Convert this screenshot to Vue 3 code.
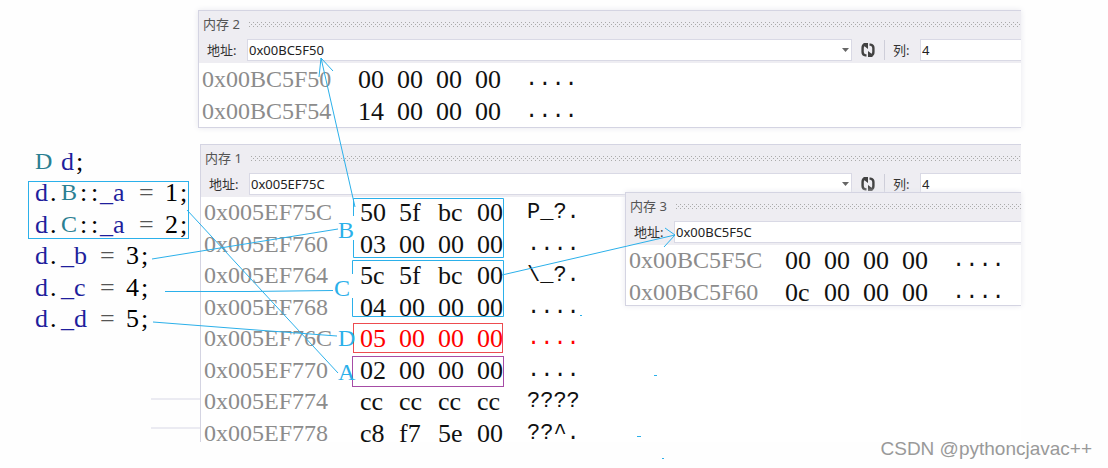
<script setup>
const bytes = (s) => s.split(' ')
const row = (address, data, ascii, changed = false) => ({ address, data: bytes(data), ascii, changed })

const panels = [
  {
    id: 2, place: 'upper', address: '0x00BC5F50', full: true,
    rows: [row('0x00BC5F50', '00 00 00 00', '....'), row('0x00BC5F54', '14 00 00 00', '....')],
  },
  {
    id: 1, place: 'lower', address: '0x005EF75C', full: true,
    rows: [
      row('0x005EF75C', '50 5f bc 00', 'P_?.'),
      row('0x005EF760', '03 00 00 00', '....'),
      row('0x005EF764', '5c 5f bc 00', '\\_?.'),
      row('0x005EF768', '04 00 00 00', '....'),
      row('0x005EF76C', '05 00 00 00', '....', true),
      row('0x005EF770', '02 00 00 00', '....'),
      row('0x005EF774', 'cc cc cc cc', '????'),
      row('0x005EF778', 'c8 f7 5e 00', '??^.'),
    ],
  },
  {
    id: 3, place: 'floating', address: '0x00BC5F5C', full: false,
    rows: [row('0x00BC5F5C', '00 00 00 00', '....'), row('0x00BC5F60', '0c 00 00 00', '....')],
  },
]

const member = (name, value) => [
  ['d', 'name'], ['.', 'dot'], [name, 'name wide'], ['=', 'op'], [value, 'num'], [';', 'dot'],
]
const qualified = (type, value) => [
  ['d', 'name'], ['.', 'dot'], [type, 'type'], [':', 'colon'], [':', 'colon'],
  ['_a', 'name wide'], ['=', 'op'], [value, 'num'], [';', 'dot'],
]
const code = [
  [['D', 'type declared'], ['d', 'name'], [';', 'dot']],
  qualified('B', '1'),
  qualified('C', '2'),
  member('_b', '3'),
  member('_c', '4'),
  member('_d', '5'),
]
</script>

<template>
  <main class="page">
    <pre class="code"><code v-for="(line, i) in code" :key="i" class="line"><span v-for="(t, j) in line" :key="j" class="token" :class="t[1]">{{ t[0] }}</span></code></pre>

    <div class="windows">
      <section v-for="p in panels" :key="p.id" class="panel" :class="p.place">
        <header class="title">
          <h2>内存 {{ p.id }}</h2>
          <svg class="grip" height="5" aria-hidden="true">
            <defs>
              <pattern :id="'grip' + p.id" width="4" height="4" patternUnits="userSpaceOnUse">
                <rect width="1" height="1" fill="#aaa" />
                <rect x="2" y="2" width="1" height="1" fill="#aaa" />
              </pattern>
            </defs>
            <rect width="100%" height="5" :fill="`url(#grip${p.id})`" />
          </svg>
        </header>
        <div class="toolbar">
          <label :for="'address' + p.id">地址:</label>
          <div class="combo">
            <input :id="'address' + p.id" type="text" :value="p.address" />
            <button v-if="p.full" type="button" aria-label="展开">
              <svg width="7" height="4" viewBox="0 0 7 4"><path d="M0 0h7L3.500 4z" fill="#666" /></svg>
            </button>
          </div>
          <template v-if="p.full">
            <button class="refresh" type="button" aria-label="刷新">
              <svg width="14" height="14" viewBox="0 0 14 14" fill="none" stroke="#424242" stroke-width="2.400">
                <path d="M5.500 12.400H4.500Q1.600 12 1.600 9V5Q1.600 1.800 4 1.800" />
                <path d="M8.500 1.600H9.500Q12.400 2 12.400 5V9Q12.400 12.200 10 12.200" />
                <path d="M2.500 0H7V6L2.500 2.500zM11.500 14H7V8L11.500 11.500z" fill="#424242" stroke="none" />
              </svg>
            </button>
            <label class="columns" :for="'columns' + p.id">列:</label>
            <input :id="'columns' + p.id" class="count" type="text" value="4" />
          </template>
        </div>
        <table>
          <tbody>
            <tr v-for="r in p.rows" :key="r.address" :class="{ changed: r.changed }">
              <th scope="row">{{ r.address }}</th>
              <td v-for="(b, k) in r.data" :key="k" class="byte">{{ b }}</td>
              <td class="ascii">{{ r.ascii }}</td>
            </tr>
          </tbody>
        </table>
      </section>
    </div>

    <svg class="notes" width="1108" height="468" viewBox="0 0 1108 468" aria-hidden="true">
      <g stroke="#ebebf2" stroke-width="2"><path d="M151 399H200M151 428H200" /></g>
      <g fill="none" stroke="#2bb0ea" stroke-width="1">
        <rect x="28.500" y="181.500" width="160" height="57" />
        <path d="M353.500 216V198.500H503.500V257.500H353.500V240" />
        <path d="M352.500 274V260.500H503.500V316.500H352.500V298" />
        <path d="M187 210L338 373" />
        <path d="M152 259L338 229" />
        <path d="M165 291.500H249L333 290.500" />
        <path d="M153 322L243 329L337 336" />
        <path d="M355 207L321 58M319 77L321 58L333 71" />
        <path d="M502 275L675 235M665 228L675 235L664 247" />
        <path d="M654 375.500h3M637 436.500h4M580 315.500h2M662 458.500h2" />
      </g>
      <rect x="353.500" y="323.500" width="149" height="29" fill="none" stroke="#ed4c50" />
      <rect x="352.500" y="356.500" width="151" height="30" fill="none" stroke="#a64ca6" />
      <g class="letters">
        <text x="338" y="238">B</text>
        <text x="334" y="296">C</text>
        <text x="338" y="346">D</text>
        <text x="338" y="380">A</text>
      </g>
    </svg>

    <footer class="mark">CSDN @pythoncjavac++</footer>
  </main>
</template>

<style>
body {
  background: #fefefe;
}
</style>

<style scoped>
.page {
  position: relative;
  display: flex;
  min-height: 468px;
  overflow: hidden;
  font-family: "Liberation Serif", serif;
}
.code {
  flex: 0 0 163px;
  margin: 0;
  padding: 146px 0 0 35px;
  font-size: 26px;
}
.line {
  display: flex;
  height: 31px;
  line-height: 31px;
  font-family: "Liberation Serif", serif;
}
.line:nth-child(even) {
  height: 32px;
}
.token {
  box-sizing: border-box;
  width: 13px;
}
.name {
  color: #1f1f9c;
}
.type {
  width: 17px;
  font-size: 24px;
  color: #2b7f92;
}
.declared {
  width: 26px;
}
.wide {
  width: 39px;
}
.op {
  width: 26px;
  color: #555;
}
.dot {
  padding-left: 2px;
}
.colon {
  width: 11px;
  padding-left: 2px;
}
.windows {
  position: relative;
  flex: 1;
  min-width: 0;
  padding: 10px 87px 0 0;
}
.panel {
  border: 1px solid #d4d4e2;
  border-right: 0;
  background: #fff;
  box-shadow: 0 0 6px #e8e8ee;
  font-family: "Noto Sans", "Noto Sans CJK SC", sans-serif;
  font-size: 13px;
  color: #333;
}
.lower {
  max-height: 297px;
  margin: 16px 0 0 2px;
  border-bottom: 0;
  box-shadow: none;
}
.floating {
  position: absolute;
  top: 192px;
  left: 427px;
  right: 87px;
  max-height: 112px;
}
.title {
  display: flex;
  align-items: center;
  gap: 9px;
  height: 26px;
  padding-left: 4px;
  background: #eeedf2;
}
h2 {
  margin: 0;
  font-size: 13px;
  font-weight: 400;
  line-height: 26px;
  color: #555;
}
.grip {
  flex: 1;
  min-width: 0;
}
.toolbar {
  display: flex;
  align-items: center;
  height: 26px;
  padding: 0 0 0 8px;
  background: #eeedf2;
}
.toolbar label {
  width: 40px;
  line-height: 20px;
}
input {
  box-sizing: border-box;
  min-width: 0;
  height: 20px;
  margin: 0;
  padding: 0 1px;
  border: 0;
  outline: 0;
  background: #fff;
  font: inherit;
  color: #222;
}
.combo {
  display: flex;
  flex: 1;
  min-width: 0;
  border: 1px solid #d9d9e5;
  background: #fff;
}
.floating .combo {
  border-right: 0;
}
.combo input {
  flex: 1;
}
button {
  display: grid;
  place-items: center;
  width: 12px;
  padding: 0;
  border: 0;
  background: none;
}
.refresh {
  width: 32px;
}
.toolbar .columns {
  width: 27px;
  padding-left: 8px;
  border-left: 1px solid #ceced9;
}
.count {
  width: 101px;
  height: 22px;
  border: 1px solid #d9d9e5;
  border-right: 0;
}
table {
  border-collapse: collapse;
  font-family: "Liberation Serif", serif;
  font-size: 26px;
  line-height: 31px;
  color: #111;
}
.upper table {
  margin-top: 1px;
}
tr {
  height: 31px;
}
tr:nth-child(even) {
  height: 32px;
}
th,
td {
  padding: 0;
  font-weight: 400;
  text-align: left;
  white-space: nowrap;
}
th {
  min-width: 156px;
  padding-left: 3px;
  font-size: 24px;
  color: #8c8c8c;
}
.byte {
  min-width: 39px;
}
.ascii {
  padding-left: 11px;
  font-family: "Liberation Mono", monospace;
  font-size: 22px;
}
.changed td {
  color: #f00;
}
.notes {
  position: absolute;
  top: 0;
  left: 0;
}
.letters {
  fill: #2bb0ea;
  font-size: 24px;
}
.mark {
  position: absolute;
  right: 16px;
  bottom: 7px;
  font-family: "Liberation Sans", sans-serif;
  font-size: 19px;
  line-height: 24px;
  color: #999;
}
</style>
